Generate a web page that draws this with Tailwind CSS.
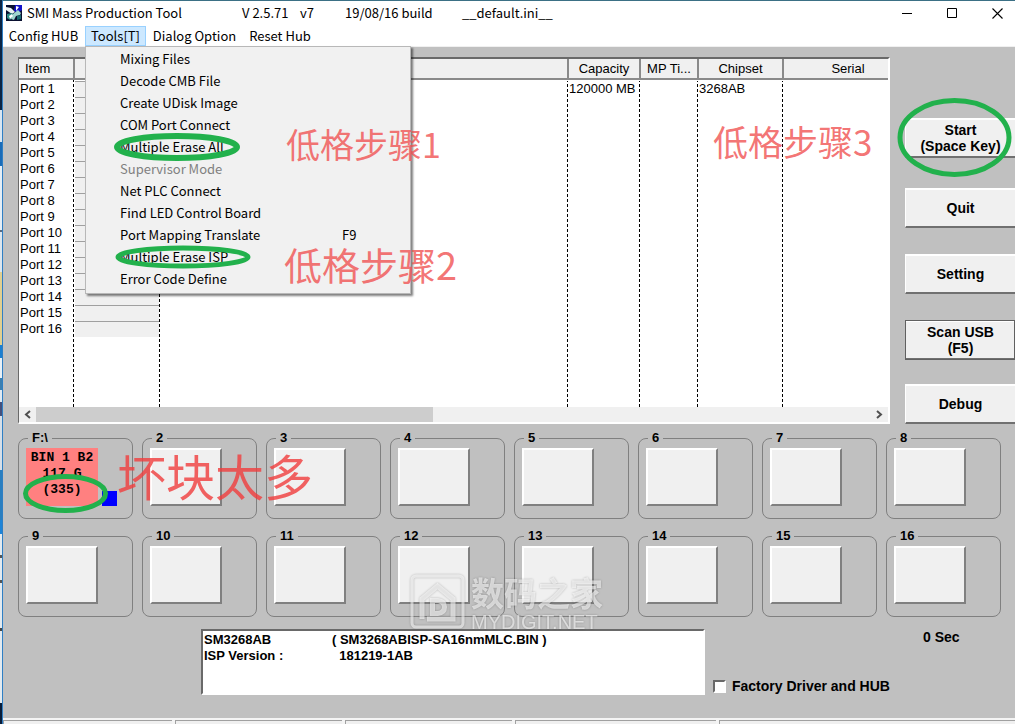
<!DOCTYPE html>
<html lang="en">
<head>
<meta charset="utf-8">
<title>SMI Mass Production Tool</title>
<script src="https://cdn.jsdelivr.net/npm/@tailwindcss/browser@4"></script>
</head>
<body class="relative flex min-h-screen overflow-hidden bg-[#c0c0c0] font-['Liberation_Sans','Noto_Sans_CJK_SC',sans-serif] text-[13px] leading-4 text-black">
<!-- desktop showing beside the window -->
<div class="w-[2px] shrink-0 bg-[linear-gradient(#0b2545_0_110px,#d8e6f2_110px_142px,#1a6cb8_142px_166px,#e4eef6_166px_230px,#5a6a80_230px_232px,#dce6ee_232px_272px,#e0cf90_272px_345px,#1b7fd0_345px_358px,#e8f0f6_358px_378px,#3b7fb0_378px_390px,#dfe9f2_390px_402px,#44507c_402px_416px,#d6dfe8_416px_470px,#2a7fc0_470px_520px,#1d84d8_520px_534px,#e2eaf0_534px_555px,#555_555px_558px,#e2eaf0_558px_580px,#555_580px_583px,#e2eaf0_583px_628px,#444_628px_631px,#e2eaf0_631px_703px,#081c38_703px)]"></div>

<div class="flex min-w-0 flex-1 flex-col border-t border-l border-t-[#3b7085] border-l-[#2f7fc4]">
  <header class="flex h-6 items-center bg-white pr-3 pl-[3px] font-['Noto_Sans_CJK_SC',sans-serif] text-[13px]">
    <svg class="mr-[5px] size-4" viewBox="0 0 16 16" aria-hidden="true">
      <path d="M0 0h16v16H0z" fill="#0a1030"/>
      <path d="M9 0h7v5l-4 3-4-2z" fill="#1414c8"/>
      <path d="M0 2l5 1 4 4-3 2-6-4z" fill="#e8f2f2"/>
      <path d="M1 9l5-1 2 3-4 4-3-2z" fill="#2f8f88"/>
      <path d="M7 9l5-4 3 3-1 2-4 1-2 4-3-1z" fill="#9fd6cf"/>
      <path d="M3 11l3-2 1 2-3 3zM10 1l3 1-3 4z" fill="#fff"/>
      <path d="M11 11l4-1v4l-4 1z" fill="#176a70"/>
    </svg>
    <h1 class="w-[215px]">SMI Mass Production Tool</h1>
    <span class="w-[58px]">V 2.5.71</span>
    <span class="w-[45px]">v7</span>
    <span class="w-[117px]">19/08/16 build</span>
    <span>__default.ini__</span>
    <div class="ml-auto flex gap-[34px]">
      <button aria-label="Minimize"><svg class="size-[11px]" viewBox="0 0 11 11"><path d="M0 5.500h10" stroke="#000"/></svg></button>
      <button aria-label="Maximize"><svg class="size-[11px]" viewBox="0 0 11 11"><path d="M.5.500h9v9h-9z" fill="none" stroke="#000"/></svg></button>
      <button aria-label="Close"><svg class="size-[11px]" viewBox="0 0 11 11"><path d="M.5.500l10 10M10.500.500l-10 10" stroke="#000" stroke-width="1.100"/></svg></button>
    </div>
  </header>

  <nav class="flex h-[22px] gap-px border-b border-[#f0f0f0] bg-white pt-px font-['Noto_Sans_CJK_SC',sans-serif] text-[13px]">
    <button class="w-[81px]">Config HUB</button>
    <div class="relative">
      <button class="h-5 w-[61px] border border-[#99d1ff] bg-[#cce8ff]">Tools[T]</button>
      <ul class="absolute top-5 left-0 z-10 w-[326px] border border-[#b8b8b8] bg-[#f1f1f1] pt-px pb-[3px] shadow-[2px_2px_2px_rgba(0,0,0,0.5)] [&_button]:flex [&_button]:h-[22px] [&_button]:w-full [&_button]:items-center [&_button]:pl-[34px]">
        <li><button>Mixing Files</button></li>
        <li><button>Decode CMB File</button></li>
        <li><button>Create UDisk Image</button></li>
        <li><button>COM Port Connect</button></li>
        <li><button>Multiple Erase All</button></li>
        <li><button class="text-[#808080]" disabled>Supervisor Mode</button></li>
        <li><button>Net PLC Connect</button></li>
        <li><button>Find LED Control Board</button></li>
        <li><button><span class="w-[222px] text-left">Port Mapping Translate</span><kbd class="font-['Noto_Sans_CJK_SC',sans-serif] text-[13px]">F9</kbd></button></li>
        <li><button>Multiple Erase ISP</button></li>
        <li><button>Error Code Define</button></li>
      </ul>
    </div>
    <button class="w-[95px]">Dialog Option</button>
    <button class="w-[74px]">Reset Hub</button>
  </nav>

  <main class="pt-[10px] pl-[15px]">
    <div class="flex gap-[15px]">
      <section class="min-w-0 flex-1 border-t-2 border-r-2 border-b-2 border-l border-t-[#696969] border-r-white border-b-white border-l-[#696969] bg-white">
        <table class="w-full table-fixed border-collapse">
          <colgroup>
            <col class="w-[55px] bg-[repeating-linear-gradient(#000_0_3px,transparent_3px_5px)] bg-[size:1px_100%] bg-right bg-no-repeat">
            <col class="w-[86px] bg-[repeating-linear-gradient(#000_0_3px,transparent_3px_5px)] bg-[size:1px_100%] bg-right bg-no-repeat">
            <col class="bg-[repeating-linear-gradient(#000_0_3px,transparent_3px_5px)] bg-[size:1px_100%] bg-right bg-no-repeat">
            <col class="w-[72px] bg-[repeating-linear-gradient(#000_0_3px,transparent_3px_5px)] bg-[size:1px_100%] bg-right bg-no-repeat">
            <col class="w-[58px] bg-[repeating-linear-gradient(#000_0_3px,transparent_3px_5px)] bg-[size:1px_100%] bg-right bg-no-repeat">
            <col class="w-[85px] bg-[repeating-linear-gradient(#000_0_3px,transparent_3px_5px)] bg-[size:1px_100%] bg-right bg-no-repeat">
            <col class="w-[105px]">
          </colgroup>
          <thead>
            <tr class="h-5 [&>th]:border-b-2 [&>th]:border-[#8a8a8a] [&>th]:bg-[#f0f0f0] [&>th]:p-0 [&>th]:font-normal [&>th:not(:last-child)]:border-r-2">
              <th><div class="pl-[6px] text-left">Item</div></th><th></th><th></th><th>Capacity</th><th>MP Ti...</th><th>Chipset</th><th><div class="pl-6">Serial</div></th>
            </tr>
          </thead>
          <tbody id="ports"></tbody>
        </table>
        <div class="flex h-[15px] items-center bg-[#f0f0f0]">
          <button class="flex w-[17px] justify-center" aria-label="Scroll left"><svg class="h-[9px] w-[7px]" viewBox="0 0 7 9"><path d="M6 1L2 4.500 6 8" fill="none" stroke="#505050" stroke-width="2"/></svg></button>
          <div class="h-full flex-1"><div class="h-full w-[47.500%] bg-[#cdcdcd]"></div></div>
          <button class="flex w-[17px] justify-center" aria-label="Scroll right"><svg class="h-[9px] w-[7px]" viewBox="0 0 7 9"><path d="M1 1l4 3.500L1 8" fill="none" stroke="#505050" stroke-width="2"/></svg></button>
        </div>
      </section>

      <aside class="flex w-[110px] flex-col pt-[61px] text-[14px] font-bold [&>button]:h-10 [&>button]:border-t-2 [&>button]:border-b-2 [&>button]:border-l [&>button]:border-t-white [&>button]:border-b-[#707070] [&>button]:border-l-white [&>button]:bg-[#f0f0f0]">
        <button>Start<br>(Space Key)</button>
        <button class="mt-[30px]">Quit</button>
        <button class="mt-[26px]">Setting</button>
        <button class="mt-[26px] outline-1 -outline-offset-1 outline-[#606060]">Scan USB<br>(F5)</button>
        <button class="mt-6">Debug</button>
      </aside>
    </div>

    <div id="slots" class="mt-[7px] grid grid-cols-8 gap-x-[9px] gap-y-[10px] pr-[14px] font-bold"></div>

    <div class="mt-3 flex items-start pl-[183px] font-bold">
      <textarea aria-label="Firmware information" readonly class="h-[66px] w-[504px] resize-none overflow-hidden border-2 border-[#696969] border-r-white border-b-white bg-white pt-px pl-px font-bold outline-none [tab-size:128px]">SM3268AB&#9;( SM3268ABISP-SA16nmMLC.BIN )
ISP Version :&#9;  181219-1AB</textarea>
      <label class="mt-[49px] ml-2 flex items-center gap-[6px] text-[14px]"><input type="checkbox" class="size-[13px] appearance-none border-2 border-[#696969] border-r-white border-b-white bg-white">Factory Driver and HUB</label>
      <output class="ml-auto w-[92px] text-[14px]">0 Sec</output>
    </div>
  </main>

  <footer class="mt-auto flex h-[6px] gap-[3px] bg-[#f4f4f4] pt-[2px] [&>div]:border-t [&>div]:border-l [&>div]:border-[#a0a0a0] [&>div]:bg-[#f0f0f0]">
    <div class="w-[169px]"></div><div class="w-[167px]"></div><div class="w-[167px]"></div><div class="w-[201px]"></div><div class="flex-1"></div>
  </footer>
</div>

<!-- watermark -->
<div class="absolute top-[574px] left-[410px] z-10 flex gap-[6px] text-white/60 drop-shadow-[0_0_1px_rgba(0,0,0,0.4)]">
  <svg class="size-[55px]" viewBox="0 0 55 55" fill="none" stroke="currentColor">
    <rect x="2" y="2" width="51" height="51" rx="4" stroke-width="3"/>
    <path d="M12 45V25L27.500 12 43 25v20H17" stroke-width="5"/>
    <path fill-rule="evenodd" d="M20 24h8q9 1 9 9t-9 9h-8zM25 29v8h3q4-1 4-4t-4-4z" fill="currentColor" stroke="none"/>
  </svg>
  <div>
    <p class="font-['Noto_Sans_CJK_SC',sans-serif] text-[33px] leading-9 font-bold">数码之家</p>
    <p class="font-['Liberation_Sans',sans-serif] text-[20px] leading-6">MYDIGIT.NET</p>
  </div>
</div>

<!-- hand-made annotations -->
<div class="absolute top-[124px] left-[286px] z-20 font-['Noto_Sans_CJK_SC',sans-serif] text-[34px] leading-10 font-normal text-[#f05050]/80">低格步骤1</div>
<div class="absolute top-[242px] left-[284px] z-20 font-['Noto_Sans_CJK_SC',sans-serif] text-[38px] leading-11 font-normal text-[#f05050]/80">低格步骤2</div>
<div class="absolute top-[121px] left-[713px] z-20 font-['Noto_Sans_CJK_SC',sans-serif] text-[35px] leading-10 font-normal text-[#f05050]/80">低格步骤3</div>
<div class="absolute top-[447px] left-[117px] z-20 font-['Noto_Sans_CJK_SC',sans-serif] text-[49px] leading-14 font-normal text-[#f03c3c]/80">坏块太多</div>
<svg class="pointer-events-none absolute top-0 left-0 z-30 h-[724px] w-[1015px]" viewBox="0 0 1015 724" fill="none" stroke="#22b14c" stroke-width="5">
  <ellipse cx="177" cy="147" rx="60" ry="11" stroke-width="6"/>
  <ellipse cx="183" cy="257" rx="65" ry="9"/>
  <ellipse cx="954.500" cy="137.500" rx="54.500" ry="37"/>
  <ellipse cx="65.500" cy="493.500" rx="40" ry="17"/>
</svg>

<script>
  const rows = [];
  for (let i = 1; i <= 16; i++) {
    rows.push(`<tr class="h-4 [&>td]:p-0 [&>td]:pl-px [&>td]:whitespace-nowrap"><td>Port ${i}</td><td><div class="mr-px h-4 border-t border-[#a0a0a0] bg-[#f0f0f0]"></div></td><td></td><td>${i === 1 ? '120000 MB' : ''}</td><td></td><td>${i === 1 ? '3268AB' : ''}</td><td></td></tr>`);
  }
  document.getElementById('ports').innerHTML =
    '<tr class="h-[2px]"><td colspan="7" class="h-[2px] p-0"></td></tr>' + rows.join('') + '<tr class="h-[70px]"><td></td><td></td><td></td><td></td><td></td><td></td><td></td></tr>';

  const slots = [];
  for (let i = 1; i <= 16; i++) {
    const button = i === 1
      ? `<button class="h-[58px] w-[72px] bg-[#ff8080] pb-[6px] font-['Liberation_Mono',monospace] text-[13px] leading-4 font-bold whitespace-pre">BIN 1 B2\n117 G\n(335)</button><i class="ml-1 size-[15px] bg-[#0000ff]"></i>`
      : `<button aria-label="Port ${i}" class="h-[58px] w-[72px] border-2 border-white border-r-[#808080] border-b-[#808080] bg-[#f0f0f0]"></button>`;
    slots.push(`<fieldset class="h-[88px] min-w-0 rounded-lg border border-[#808080] pl-[7px]"><legend class="ml-[2px] h-[14px] px-1 leading-[14px]">${i === 1 ? 'F:\\' : i}</legend><div class="mt-[3px] flex items-end">${button}</div></fieldset>`);
  }
  document.getElementById('slots').innerHTML = slots.join('');
</script>
</body>
</html>
